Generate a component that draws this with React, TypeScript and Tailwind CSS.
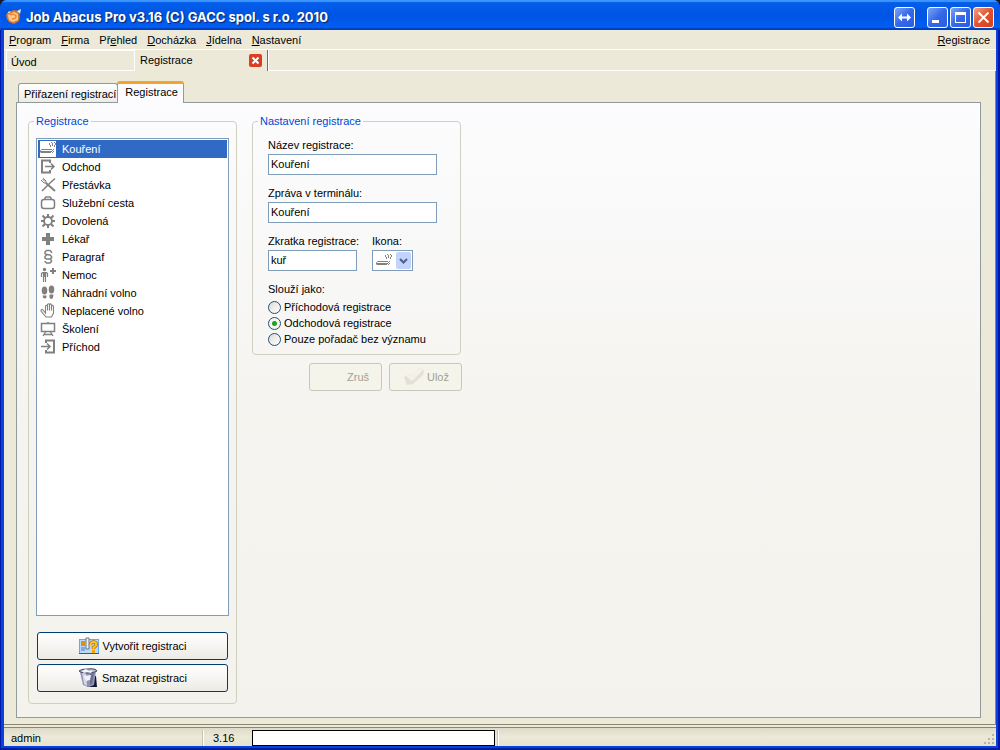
import { useState } from "react";
import type { ReactNode } from "react";

type IconName =
  | "smoke"
  | "exit"
  | "meal"
  | "case"
  | "sun"
  | "doctor"
  | "paragraph"
  | "sick"
  | "steps"
  | "hand"
  | "board"
  | "enter";

const items: { label: string; icon: IconName }[] = [
  { label: "Kouření", icon: "smoke" },
  { label: "Odchod", icon: "exit" },
  { label: "Přestávka", icon: "meal" },
  { label: "Služební cesta", icon: "case" },
  { label: "Dovolená", icon: "sun" },
  { label: "Lékař", icon: "doctor" },
  { label: "Paragraf", icon: "paragraph" },
  { label: "Nemoc", icon: "sick" },
  { label: "Náhradní volno", icon: "steps" },
  { label: "Neplacené volno", icon: "hand" },
  { label: "Školení", icon: "board" },
  { label: "Příchod", icon: "enter" },
];

// [before, hotkey, after]
const menu = [
  ["", "P", "rogram"],
  ["", "F", "irma"],
  ["Př", "e", "hled"],
  ["", "D", "ocházka"],
  ["", "J", "ídelna"],
  ["", "N", "astavení"],
];

const modes = [
  "Příchodová registrace",
  "Odchodová registrace",
  "Pouze pořadač bez významu",
];

const shapes: Record<IconName, ReactNode> = {
  smoke: (
    <>
      <path d="M11 8.5H1.5L.5 9.500V11" />
      <path d="M.5 11H11" strokeWidth="2" />
      <path d="M11.500 8v1M13.500 8v1M12.500 9v1M11.500 10v1M13.500 10v1M12.500 11v1" />
      <path d="M9.500 2v2M10.500 4v2M11.500 1v1M12.500 2v3M14.500 1v1M15.500 2v2M14.500 4v2" />
    </>
  ),
  exit: (
    <>
      <path d="M10 4V1.500H2V13.500H10V11" strokeWidth="2" />
      <path d="M5 7.500H14M11 4.500L14 7.500L11 10.500" strokeWidth="1.500" />
    </>
  ),
  meal: (
    <>
      <path d="M15 1.500L10 6L2 14" strokeWidth="1.500" />
      <path d="M6 6L15 14" strokeWidth="2" />
      <path d="M1 3L4 6H6V4L3 1M2.500 2L5 4.500" />
    </>
  ),
  case: (
    <>
      <rect x="1.500" y="4.500" width="13" height="9" rx="2.500" strokeWidth="1.500" />
      <path d="M5 4.500V3L6 2h4L11 3v1.500" strokeWidth="1.500" />
    </>
  ),
  sun: (
    <>
      <circle cx="8" cy="8" r="4" strokeWidth="1.800" />
      <path d="M8 1v3M8 12v3M1 8h3M12 8h3M2.500 2.500L5 5M11 11l2.500 2.500M13.500 2.500L11 5M5 11l-2.500 2.500" strokeWidth="2" />
    </>
  ),
  doctor: <path d="M8 2v12M2 8h12" strokeWidth="4" />,
  paragraph: (
    <path
      d="M11.500 4V3L10 1.500H6.500L5 3V4.500L6.500 5.500L10 6L11.500 7.500V9L10 10H6.500L5 9V7.500L6.500 6M10 10L11.500 11.500V12.500L10 14H6.500L5 12.500V12"
      strokeWidth="1.500"
    />
  ),
  sick: (
    <>
      <circle cx="4.500" cy="2.500" r="1.700" fill="#808080" stroke="none" />
      <path d="M1.500 10V6.500L2.500 5.500H6.500L7.500 6.500V10M3.500 5.500V15M5.500 5.500V15M4.500 5v5" strokeWidth="1.200" />
      <path d="M13 1v6M10 4h6" strokeWidth="2" />
    </>
  ),
  steps: (
    <g fill="#808080" stroke="none">
      <ellipse cx="4.500" cy="5.500" rx="2.800" ry="4" />
      <path d="M2.500 10.500h4v2a2 2 0 0 1-3.500 0z" />
      <ellipse cx="11.500" cy="4.500" rx="2.800" ry="4" />
      <path d="M9.500 9.500h4l-.5 3a1.800 1.800 0 0 1-3.500 0z" />
    </g>
  ),
  hand: (
    <path
      d="M5.500 8V3Q6.500 1.500 7.500 3V7.500V1.500Q8.500 0 9.500 1.500V7.500V1.500Q10.500 0 11.500 2V7.500V3Q12.500 1.500 13.500 3.500V10L11.500 14H6L1 8Q1 6 2.500 6.500L5.500 10V7"
      strokeWidth="1.100"
    />
  ),
  board: (
    <>
      <path d="M1.500 2.500h13v8h-13zM8 1v1" strokeWidth="1.500" />
      <path d="M5.500 11L3 15M10.500 11l2.500 4M4 13.500h8" strokeWidth="1.300" />
    </>
  ),
  enter: (
    <>
      <path d="M6 4V1.500H14V13.500H6V11" strokeWidth="2" />
      <path d="M1 7.500H10M7 4.500L10 7.500L7 10.500" strokeWidth="1.500" />
    </>
  ),
};

function ItemIcon({ name }: { name: IconName }) {
  return (
    <svg viewBox="0 0 16 16" className="h-4 w-4 shrink-0 bg-white" fill="none" stroke="#808080" aria-hidden="true">
      {shapes[name]}
    </svg>
  );
}

function AppLogo() {
  return (
    <svg viewBox="0 0 16 16" className="h-4 w-4 shrink-0" aria-hidden="true">
      <path d="M0 6L3 3L8 1L12 2L14 7L13 12L8 15L3 13L1 10z" fill="#d9772f" />
      <path d="M2 6L8 3L12 5L12 11L7 13L3 11z" fill="#ffc98c" />
      <path d="M4 6Q8 4 10 7Q10 10 6 10" fill="none" stroke="#e88a3c" strokeWidth="1.500" />
      <path d="M11 2L15 0L14 5z" fill="#fbe3c6" />
      <path d="M1 5L3 2L5 3z" fill="#f5d0b0" />
    </svg>
  );
}

function CreateIcon() {
  return (
    <svg viewBox="0 0 20 18" className="h-[18px] w-5" aria-hidden="true">
      <rect x="0" y="2" width="20" height="15" fill="#6aa5ee" />
      <rect x="1" y="3" width="18" height="13" fill="#b9d8fa" />
      <path d="M0 16.500h20" stroke="#2c56b0" />
      <rect x="2" y="4" width="4" height="5" fill="#d79412" />
      <path d="M2 11h4M2 13h4" stroke="#4d78c8" />
      <path d="M7 1h3v11H7z" fill="#eef0f4" stroke="#6d7488" />
      <path d="M11.500 8Q12 4.500 15 5Q18 5.500 17 8.500Q16 10 14.500 10.500V12" fill="none" stroke="#b87400" strokeWidth="3.500" />
      <path d="M11.500 8Q12 4.500 15 5Q18 5.500 17 8.500Q16 10 14.500 10.500V12" fill="none" stroke="#ffc420" strokeWidth="2" />
      <rect x="13" y="13" width="3" height="3" fill="#f2a900" />
    </svg>
  );
}

function BinIcon() {
  return (
    <svg viewBox="0 0 20 20" className="h-5 w-5" aria-hidden="true">
      <path d="M15 8L18 8L19 19H8L15 17z" fill="#14142e" />
      <path d="M2 4L18 3L16 17L11 19L5 17z" fill="#8f91b4" />
      <path d="M4 5L8 5L9 18L6 16z" fill="#d6d8ea" />
      <path d="M12 6L16 5L14 16L12 17z" fill="#6d6f92" />
      <path d="M1 3Q3 1 9 1Q18 0 19 3Q17 5 9 5Q2 5 1 3z" fill="#b4b5c4" stroke="#4a4b68" />
      <path d="M4 3L8 1L11 3L15 2L13 5L9 4L6 5z" fill="#f6f6fa" />
      <path d="M6 8L13 7L12 12L8 13z" fill="#f2f2fa" />
    </svg>
  );
}

const frame =
  "flex h-[21px] w-[21px] items-center justify-center rounded-[3px] border border-white";
const blueFrame = `${frame} bg-linear-to-br from-[#7ba4f6] via-[#3468e8] to-[#2a5ce0]`;
const field = "mt-px block h-[21px] border border-[#7f9db9] bg-white px-0.5 pb-0.5 text-[11px] leading-4 outline-none";
const group = "min-w-0 rounded-[4px] border border-[#d0d0bf]";
const legend = "-ml-0.5 px-0.5 text-[#0046d5]";
const wideButton =
  "mx-px flex h-7 items-center justify-center gap-1 rounded-[3px] border border-[#003c74] bg-linear-to-b from-white to-[#ecebe5]";
const offButton =
  "flex h-7 w-[73px] items-center justify-end gap-0.5 rounded-[3px] border border-[#c9c7ba] bg-[#f5f4ea] pr-3 text-[#a1a192]";

export default function App() {
  const [selected, setSelected] = useState(0);
  const [mode, setMode] = useState(1);

  return (
    <div className="bg-[#1b1b1b]">
      <div className="flex h-screen flex-col overflow-hidden rounded-t-[7px] bg-[#0841dc] font-['Liberation_Sans',Arial,sans-serif] text-[11px] leading-4 text-black shadow-[inset_0_-2px_#001ea0,inset_-2px_0_#0018a8,inset_1px_0_#0018a8]">
        {/* Title bar */}
        <header className="flex h-[30px] shrink-0 items-center bg-linear-to-b from-[#0560ea] via-[#0054e3] to-[#0060f6] pt-1 pr-1.5 pl-1.5 shadow-[inset_0_2px_1px_#3d95ff,inset_0_-2px_1px_#0040c0]">
          <AppLogo />
          <h1 className="ml-1 flex-1 font-[Inter,sans-serif] text-[13px] font-bold text-white [text-shadow:1px_1px_1px_#0a246a]">
            Job Abacus Pro v3.16 (C) GACC spol. s r.o. 2010
          </h1>
          <div className="flex gap-0.5">
            <button aria-label="Roztáhnout" className={`${blueFrame} mr-2.5`}>
              <svg viewBox="0 0 15 15" className="h-[15px] w-[15px]" fill="#fff">
                <path d="M1 7.500L5 3.500V6.500H10V3.500L14 7.500L10 11.500V8.500H5V11.500z" />
              </svg>
            </button>
            <button aria-label="Minimalizovat" className={blueFrame}>
              <svg viewBox="0 0 15 15" className="h-[15px] w-[15px]" fill="#fff">
                <path d="M2 10h7v3H2z" />
              </svg>
            </button>
            <button aria-label="Maximalizovat" className={blueFrame}>
              <svg viewBox="0 0 15 15" className="h-[15px] w-[15px]" fill="#fff">
                <path fillRule="evenodd" d="M2 2h11v11H2zM3 5v7h9V5z" />
              </svg>
            </button>
            <button aria-label="Zavřít" className={`${frame} bg-linear-to-br from-[#f0a088] via-[#e2512c] to-[#d0431a]`}>
              <svg viewBox="0 0 15 15" className="h-[15px] w-[15px]" stroke="#fff" strokeWidth="2">
                <path d="M2.500 2.500l10 10M12.500 2.500l-10 10" />
              </svg>
            </button>
          </div>
        </header>

        <div className="mx-1 mb-1 flex min-h-0 flex-1 flex-col bg-[#ece9d8]">
          <nav className="flex h-[19px] shrink-0 items-center gap-2.5 pr-1.5 pl-[5px]">
            {menu.map(([before, key, after]) => (
              <button key={after}>
                {before}
                <span className="underline">{key}</span>
                {after}
              </button>
            ))}
            <button className="ml-auto">
              <span className="underline">R</span>egistrace
            </button>
          </nav>

          {/* Open windows */}
          <div className="flex h-[22px] shrink-0 border-t border-white pl-0.5">
            <button className="w-[129px] border border-white pt-0.5 pl-1 text-left leading-4">Úvod</button>
            <div className="flex w-[133px] items-center border-r border-[#716f64] pr-[5px] pl-[5px]">
              <button className="flex-1 pb-0.5 text-left">Registrace</button>
              <button aria-label="Zavřít kartu" className="flex h-[13px] w-[13px] items-center justify-center rounded-[2px] bg-[#dc3d22]">
                <svg viewBox="0 0 9 9" className="h-[9px] w-[9px]" stroke="#fff" strokeWidth="2">
                  <path d="M1.500 1.500l6 6M7.500 1.500l-6 6" />
                </svg>
              </button>
            </div>
            <div className="flex-1 border-b border-l border-white" />
          </div>

          <main className="flex min-h-0 flex-1 flex-col border-r border-b border-[#8a8772] pt-2.5 pr-3.5 pb-1.5 pl-3">
            <div className="flex h-[22px] shrink-0 items-end pl-0.5">
              <button className="h-5 rounded-t-[3px] border border-b-0 border-[#919b9c] bg-linear-to-b from-white to-[#ecebe6] pr-px pl-[5px]">
                Přiřazení registrací
              </button>
              <button className="z-10 -mb-px -ml-px h-[22px] self-start rounded-t-[3px] border border-t-[3px] border-b-0 border-[#919b9c] border-t-[#f0a52e] bg-[#fcfcfe] pr-[5px] pl-[7px] pb-1">
                Registrace
              </button>
            </div>

            <div className="-mt-px flex min-h-0 flex-1 gap-[15px] border border-[#919b9c] bg-linear-to-b from-[#fcfcfe] via-[#f5f4f0] to-[#f3f2ec] px-[11px] pt-2.5 pb-[13px]">
              <fieldset className={`${group} flex w-[209px] flex-col px-[7px] pt-[9px] pb-[11px]`}>
                <legend className={legend}>Registrace</legend>
                <ul className="flex-1 border border-[#7f9db9] bg-white p-px">
                  {items.map((item, i) => (
                    <li key={item.icon}>
                      <button
                        onClick={() => setSelected(i)}
                        className={`flex h-[18px] w-full items-center gap-1.5 pl-0.5 ${
                          i === selected ? "bg-[#316ac5] text-white" : ""
                        }`}
                      >
                        <ItemIcon name={item.icon} />
                        {item.label}
                      </button>
                    </li>
                  ))}
                </ul>
                <button className={`${wideButton} mt-4`}>
                  <CreateIcon />
                  Vytvořit registraci
                </button>
                <button className={`${wideButton} mt-1`}>
                  <BinIcon />
                  Smazat registraci
                </button>
              </fieldset>

              <div className="w-[210px]">
                <fieldset className={`${group} w-[209px] px-[15px] pt-2 pb-[7px]`}>
                  <legend className={`${legend} -ml-2.5`}>Nastavení registrace</legend>
                  <label className="block w-[169px]">
                    Název registrace:
                    <input className={`${field} w-full`} defaultValue="Kouření" />
                  </label>
                  <label className="mt-2.5 block w-[169px]">
                    Zpráva v terminálu:
                    <input className={`${field} w-full`} defaultValue="Kouření" />
                  </label>
                  <div className="mt-2.5 flex gap-[15px]">
                    <label className="block w-[89px]">
                      <span className="whitespace-nowrap">Zkratka registrace:</span>
                      <input className={`${field} w-full`} defaultValue="kuř" />
                    </label>
                    <div>
                      <label htmlFor="icon" className="block">
                        Ikona:
                      </label>
                      <div className="relative mt-px h-[21px] w-[41px]">
                        <select id="icon" className="h-full w-full appearance-none border border-[#7f9db9] bg-white">
                          <option value="smoke" aria-label="Kouření" />
                        </select>
                        <div className="pointer-events-none absolute inset-0 flex items-center justify-between pr-0.5 pl-1">
                          <ItemIcon name="smoke" />
                          <svg viewBox="0 0 15 17" className="h-[17px] w-[15px] rounded-[2px] bg-[#c3d3fd]" fill="none" stroke="#4d6185" strokeWidth="2">
                            <path d="M4 7l3.500 3.500L11 7" />
                          </svg>
                        </div>
                      </div>
                    </div>
                  </div>
                  <div role="radiogroup" aria-labelledby="mode" className="mt-2.5">
                    <div id="mode" className="mb-0.5">
                      Slouží jako:
                    </div>
                    {modes.map((label, i) => (
                      <label key={label} className="flex items-center gap-[3px]">
                        <input
                          type="radio"
                          name="mode"
                          checked={i === mode}
                          onChange={() => setMode(i)}
                          className="h-[13px] w-[13px] appearance-none rounded-full border border-[#1c5180] bg-linear-to-br from-[#dcdcd6] to-white checked:bg-[radial-gradient(circle,#21a121_0_2px,#f4f4f0_3px)]"
                        />
                        {label}
                      </label>
                    ))}
                  </div>
                </fieldset>
                <div className="mt-2 flex justify-end gap-[7px]">
                  <button disabled className={offButton}>
                    Zruš
                  </button>
                  <button disabled className={offButton}>
                    <svg viewBox="0 0 22 20" className="h-5 w-[22px]" aria-hidden="true">
                      <path d="M1 10L6 7L9 9L16 1L21 3L20 8L10 17L4 18z" fill="#e3e1d3" />
                      <path d="M3 9L6 7L9 9L16 1L20 3L9 14z" fill="#f4f2e8" />
                    </svg>
                    Ulož
                  </button>
                </div>
              </div>
            </div>
          </main>

          {/* Status bar */}
          <footer className="mt-0.5 flex h-[19px] shrink-0 items-center border-t border-[#8a8772] bg-linear-to-b from-[#dedbcb] via-[#ece9d8] to-[#e6e2cf] pt-0.5 pl-[7px]">
            <span className="w-[191px]">admin</span>
            <span className="w-[46px] border-l border-[#c5c2b2] pl-2.5 shadow-[inset_1px_0_#fff]">3.16</span>
            <div role="progressbar" aria-label="Průběh" className="mr-0.5 ml-1 h-4 w-[243px] border border-black bg-white" />
            <div className="h-4 flex-1 border-l border-[#c5c2b2] shadow-[inset_1px_0_#fff]" />
            <svg viewBox="0 0 12 12" className="h-3 w-3 self-end" fill="#b8b4a2" aria-hidden="true">
              <path d="M8 0h2v2H8zM8 4h2v2H8zM4 4h2v2H4zM8 8h2v2H8zM4 8h2v2H4zM0 8h2v2H0z" />
            </svg>
          </footer>
        </div>
      </div>
    </div>
  );
}
